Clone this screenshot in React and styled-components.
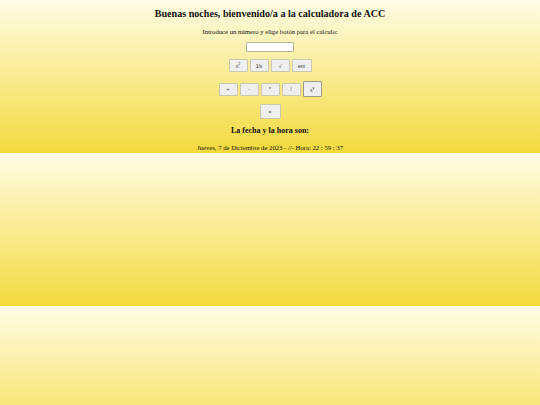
import React from "react";
import styled, { createGlobalStyle } from "styled-components";

const GlobalStyle = createGlobalStyle`
  html {
    background: linear-gradient(#fffce6, #f4da3c);
    background-size: 100% 153px;
    background-repeat: repeat;
    min-height: 100%;
  }
  body {
    margin: 0;
    font-family: "Liberation Serif", "Times New Roman", serif;
    color: #111;
  }
`;

const Page = styled.div`
  display: flex;
  flex-direction: column;
  align-items: center;
  text-align: center;
`;

const Title = styled.h1`
  margin: 7px 0 0;
  font-size: 10.1px;
  line-height: 14px;
  font-weight: bold;
`;

const Hint = styled.p`
  margin: 6px 0 0;
  font-size: 6.7px;
  line-height: 10px;
`;

const NumberInput = styled.input`
  box-sizing: border-box;
  margin: 5px 0 0;
  width: 48px;
  height: 10px;
  padding: 0;
  border: 1px solid #b9b39a;
  border-radius: 1px;
  background: #fff;
`;

const Row = styled.div`
  display: flex;
  gap: 2px;
  margin-top: ${(p) => p.$mt}px;
  align-items: center;
`;

const CalcButton = styled.button`
  box-sizing: border-box;
  width: ${(p) => p.$w || 19}px;
  height: ${(p) => p.$h || 13}px;
  padding: 0;
  font-family: "Liberation Sans", Arial, sans-serif;
  font-size: 5px;
  color: #333;
  background: #efefef;
  border: 1px solid ${(p) => (p.$dark ? "#9a9a8a" : "#c9c6b4")};
  border-radius: 1px;
  sup {
    font-size: 3.5px;
  }
`;

const Subtitle = styled.h3`
  margin: 6px 0 0;
  font-size: 8px;
  line-height: 11px;
  font-weight: bold;
`;

const DateLine = styled.p`
  margin: 7px 0 0;
  font-size: 6.7px;
  line-height: 9px;
`;

export default function App() {
  return (
    <>
      <GlobalStyle />
      <Page>
        <Title>Buenas noches, bienvenido/a a la calculadora de ACC</Title>
        <Hint>Introduce un número y elige botón para el calculo:</Hint>
        <NumberInput type="text" />
        <Row $mt={7}>
          <CalcButton>
            x<sup>2</sup>
          </CalcButton>
          <CalcButton>1/x</CalcButton>
          <CalcButton>√</CalcButton>
          <CalcButton $w={20}>ent</CalcButton>
        </Row>
        <Row $mt={9}>
          <CalcButton>+</CalcButton>
          <CalcButton>-</CalcButton>
          <CalcButton>*</CalcButton>
          <CalcButton>/</CalcButton>
          <CalcButton $h={16} $dark>
            x<sup>y</sup>
          </CalcButton>
        </Row>
        <Row $mt={7}>
          <CalcButton $w={21} $h={15}>=</CalcButton>
        </Row>
        <Subtitle>La fecha y la hora son:</Subtitle>
        <DateLine>Jueves, 7 de Diciembre de 2023 - //- Hora: 22 : 59 : 37</DateLine>
      </Page>
    </>
  );
}
